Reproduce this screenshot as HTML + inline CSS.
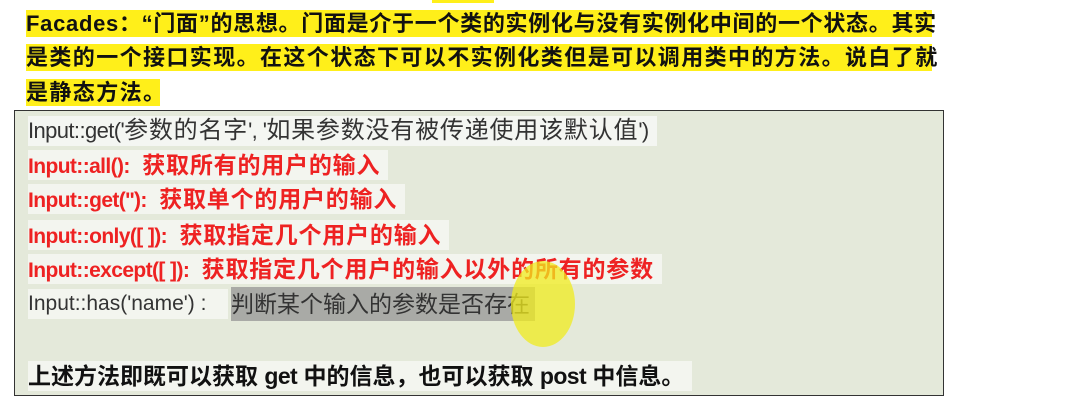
<!DOCTYPE html>
<html><head><meta charset="utf-8"><style>
body{margin:0;width:1077px;height:415px;background:#fff;position:relative;overflow:hidden;font-family:"Liberation Sans","Noto Sans CJK SC",sans-serif}
.y{position:absolute;left:26px;background:#ffef1a;height:27px;line-height:27px;font-size:22px;font-weight:bold;color:#111;white-space:nowrap;letter-spacing:1.4px}
.box{position:absolute;left:14px;top:110px;width:928px;height:284px;background:#e4e9da;border:1.5px solid #333}
.l{position:absolute;left:13px;white-space:nowrap;height:30px;line-height:30px;font-size:23px;background:#f3f5ef;padding-right:8px}
.l i{font-style:normal;letter-spacing:-0.6px}
.r{color:#ee2222;font-weight:bold;letter-spacing:0.8px}
.g{color:#333}
</style></head><body>
<div style="position:absolute;left:432px;top:0;width:62px;height:3px;background:#ffef1a"></div>
<div class="y" style="top:10px;width:906px;letter-spacing:0.7px">Facades：“门面”的思想。门面是介于一个类的实例化与没有实例化中间的一个状态。其实</div>
<div class="y" style="top:44px;width:906px">是类的一个接口实现。在这个状态下可以不实例化类但是可以调用类中的方法。说白了就</div>
<div class="y" style="top:79px;width:134px">是静态方法。</div>
<div class="box">
<div class="l g" style="top:5px;background:#f4f6f2;font-size:24px;letter-spacing:0.8px"><i style="font-size:22px">Input::get('</i>参数的名字<i style="font-size:22px">', '</i>如果参数没有被传递使用该默认值<i style="font-size:22px">')</i></div>
<div class="l r" style="top:39px"><i style="font-size:21px">Input::all():&nbsp;</i> 获取所有的用户的输入</div>
<div class="l r" style="top:73px"><i style="font-size:21px">Input::get(''):&nbsp;</i> 获取单个的用户的输入</div>
<div class="l r" style="top:109px"><i style="font-size:21px">Input::only([ ]):&nbsp;</i> 获取指定几个用户的输入</div>
<div class="l r" style="top:143px"><i style="font-size:21px">Input::except([ ]):&nbsp;</i> 获取指定几个用户的输入以外的所有的参数</div>
<div class="l g" style="top:178px;width:192px;font-size:21px"><i style="letter-spacing:0">Input::has('name') :</i></div>
<div class="l g" style="top:176px;left:216px;width:296px;height:34px;line-height:34px;background:#a9aaa6">判断某个输入的参数是否存在</div>
<div style="position:absolute;left:496px;top:150px;width:64px;height:86px;border-radius:50%;background:rgba(240,235,30,.75)"></div>
<div class="l" style="top:250px;font-weight:bold;color:#111;font-size:23px">上述方法即既可以获取 <i>get</i> 中的信息，也可以获取 <i>post</i> 中信息。</div>
</div>
</body></html>
